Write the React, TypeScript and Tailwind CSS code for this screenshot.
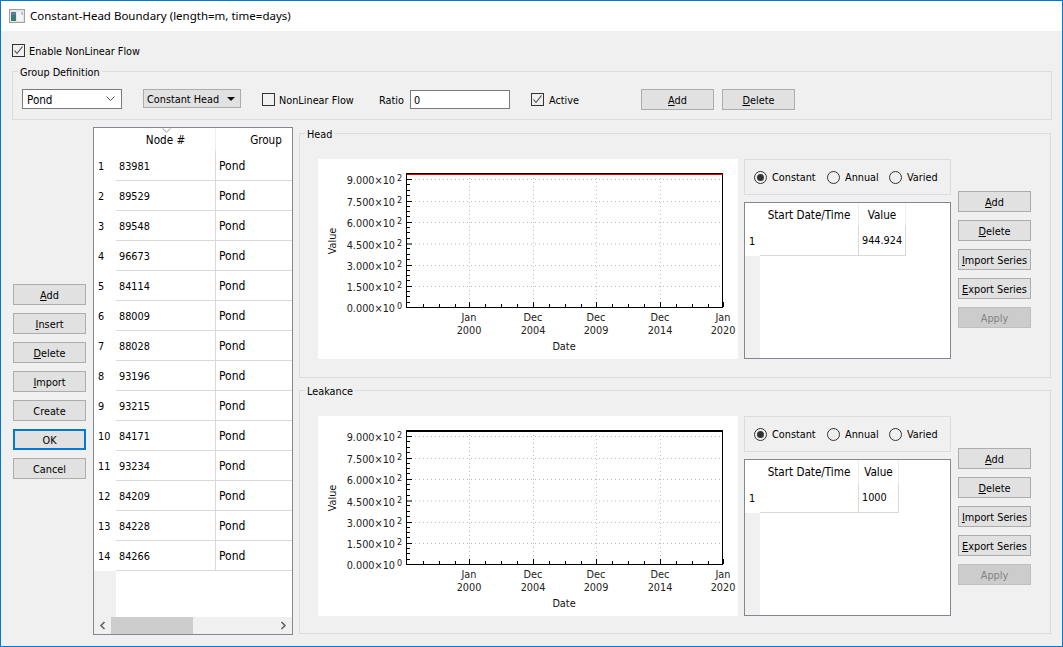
const nodes = [
  '83981', '89529', '89548', '96673', '84114', '88009', '88028',
  '93196', '93215', '84171', '93234', '84209', '84228', '84266',
]

const yLabels = [
  { y: 20, text: '9.000', exp: '2' },
  { y: 42, text: '7.500', exp: '2' },
  { y: 63, text: '6.000', exp: '2' },
  { y: 84.5, text: '4.500', exp: '2' },
  { y: 106, text: '3.000', exp: '2' },
  { y: 127, text: '1.500', exp: '2' },
  { y: 148, text: '0.000', exp: '0' },
]

const xLabels = [
  { x: 151, top: 'Jan', bottom: '2000' },
  { x: 215, top: 'Dec', bottom: '2004' },
  { x: 278, top: 'Dec', bottom: '2009' },
  { x: 342, top: 'Dec', bottom: '2014' },
  { x: 405, top: 'Jan', bottom: '2020' },
]

const xMinor = [105, 121, 137, 167, 183, 199, 231, 247, 263, 294, 310, 326, 358, 374, 390]

function Chart({ red }: { red?: boolean }) {
  const yMinor: number[] = []
  for (let i = 0; i < 6; i++) {
    for (let j = 1; j < 4; j++) yMinor.push(20 + i * 21.33 + (j * 21.33) / 4)
  }
  return (
    <div className="w-[420px] h-[200px] bg-white shrink-0">
      <svg width="420" height="200" className="block">
        {yLabels.slice(0, 6).map((l) => (
          <line key={l.y} x1="89" x2="405" y1={l.y + 0.5} y2={l.y + 0.5} stroke="#bbbbbb" strokeDasharray="1 3" />
        ))}
        {xLabels.slice(0, 4).map((l) => (
          <line key={l.x} x1={l.x + 0.5} x2={l.x + 0.5} y1="15" y2="148" stroke="#bbbbbb" strokeDasharray="1 3" />
        ))}
        {yLabels.map((l) => (
          <g key={l.y}>
            <line x1="89" x2="94" y1={l.y + 0.5} y2={l.y + 0.5} stroke="#000000" />
            <text x="77" y={l.y + 5} textAnchor="end" fill="#222222">
              {l.text}×10
            </text>
            <text x="79" y={l.y + 2} fontSize="9" fill="#222222">
              {l.exp}
            </text>
          </g>
        ))}
        {yMinor.map((y) => (
          <line key={y} x1="89" x2="92" y1={Math.round(y) + 0.5} y2={Math.round(y) + 0.5} stroke="#000000" />
        ))}
        {xMinor.map((x) => (
          <line key={x} x1={x + 0.5} x2={x + 0.5} y1="145" y2="148" stroke="#000000" />
        ))}
        {xLabels.map((l) => (
          <g key={l.x}>
            <line x1={l.x + 0.5} x2={l.x + 0.5} y1="143" y2="148" stroke="#000000" />
            <text x={l.x} y="162" textAnchor="middle" fill="#222222">
              {l.top}
            </text>
            <text x={l.x} y="175" textAnchor="middle" fill="#222222">
              {l.bottom}
            </text>
          </g>
        ))}
        <rect x="88.5" y="14.5" width="316" height="134" fill="none" stroke="#000000" />
        <line x1="89" x2="405" y1="15.5" y2="15.5" stroke={red ? '#e00000' : '#000000'} strokeWidth="1.2" />
        <text x="246" y="191" textAnchor="middle" fill="#111111">
          Date
        </text>
        <text transform="translate(18 82) rotate(-90)" textAnchor="middle" fill="#111111">
          Value
        </text>
      </svg>
    </div>
  )
}

function Btn({ u, rest, label, primary, disabled }: {
  u?: string
  rest?: string
  label?: string
  primary?: boolean
  disabled?: boolean
}) {
  let look = 'bg-[#e1e1e1] border border-[#adadad] text-black'
  if (primary) look = 'bg-[#e1e1e1] border-2 border-[#0078d7] text-black'
  if (disabled) look = 'bg-[#cccccc] border border-[#bfbfbf] text-[#838383]'
  return (
    <button className={`w-[73px] h-[21px] pt-[3px] flex items-center justify-center shrink-0 whitespace-nowrap ${look}`}>
      {u ? (
        <span>
          <u>{u}</u>
          {rest}
        </span>
      ) : (
        label
      )}
    </button>
  )
}

function Check({ on }: { on?: boolean }) {
  return (
    <span className="w-[13px] h-[13px] border border-[#333333] bg-transparent flex items-center justify-center shrink-0">
      {on && (
        <svg width="11" height="11" viewBox="0 0 11 11">
          <path d="M1.5 5.5 L4 8.5 L9.5 1.5" fill="none" stroke="#444444" strokeWidth="1.1" />
        </svg>
      )}
    </span>
  )
}

function Radio({ on, label, className }: { on?: boolean; label: string; className: string }) {
  return (
    <div className={`flex items-center gap-[5px] shrink-0 ${className}`}>
      <span className="w-[13px] h-[13px] rounded-full border border-[#333333] flex items-center justify-center shrink-0">
        {on && <span className="w-[7px] h-[7px] rounded-full bg-[#333333]" />}
      </span>
      <span className="pt-[3px]">{label}</span>
    </div>
  )
}

function SeriesPanel({ value, title, valueWidth, className }: {
  value: string
  title: string
  valueWidth: string
  className: string
}) {
  return (
    <section className={`relative w-[752px] border border-[#dcdcdc] ${className}`}>
      <span className="absolute left-[5px] -top-[7px] bg-[#f0f0f0] px-[2px] leading-[16px] h-[14px]">{title}</span>
      <div className="flex pl-[18px] pt-[25px]">
        <Chart red={title === 'Head'} />
        <div className="ml-[6px] w-[207px] shrink-0">
          <div className="h-[36px] border border-[#dcdcdc] flex items-center pl-[9px]">
            <Radio on label="Constant" className="w-[73px]" />
            <Radio label="Annual" className="w-[62px]" />
            <Radio label="Varied" className="w-[60px]" />
          </div>
          <div className="mt-[7px] h-[157px] border border-[#828790] bg-white flex">
            <div className="w-[15px] bg-[#f0f0f0] shrink-0">
              <div className="h-[23px] bg-white" />
              <div className="h-[30px] bg-white flex items-center pl-[4px] pt-[2px]">1</div>
            </div>
            <div>
              <div className="h-[23px] flex text-[11.6px]">
                <div className="w-[99px] text-center leading-[24px] border-r border-[#eeeeee]">Start Date/Time</div>
                <div className={`${valueWidth} text-center leading-[24px] border-r border-[#eeeeee]`}>Value</div>
              </div>
              <div className="h-[30px] flex border-b border-[#d9d9d9]">
                <div className="w-[99px] border-r border-[#d9d9d9]" />
                <div className={`${valueWidth} flex items-center pl-[3px] pt-[2px] border-r border-[#d9d9d9]`}>{value}</div>
              </div>
            </div>
          </div>
        </div>
        <div className="ml-[7px] pt-[32px] flex flex-col gap-[8px]">
          <Btn u="A" rest="dd" />
          <Btn u="D" rest="elete" />
          <Btn u="I" rest="mport Series" />
          <Btn u="E" rest="xport Series" />
          <Btn label="Apply" disabled />
        </div>
      </div>
    </section>
  )
}

export default function App() {
  return (
    <div className="w-[1063px] h-[647px] border border-[#0078d7] bg-[#f0f0f0] overflow-hidden text-[10.8px] text-black font-['DejaVu_Sans_Condensed','DejaVu_Sans',sans-serif]">
      <div className="h-[30px] bg-white flex items-center pl-[8px]">
        <svg width="16" height="14" viewBox="0 0 16 14" className="shrink-0">
          <rect x="0.5" y="0.5" width="15" height="13" fill="#e6e6e6" stroke="#a0a0a0" />
          <rect x="2" y="3" width="5" height="9" fill="#3c7a70" />
          <rect x="2" y="3" width="5" height="3" fill="#5a7f9a" />
          <rect x="8" y="3" width="6" height="9" fill="#f4f4f4" />
          <rect x="12" y="3" width="2" height="3" fill="#b8c4d0" />
        </svg>
        <span className="ml-[5px] text-[11.5px] text-black font-['Noto_Sans',sans-serif]">Constant-Head Boundary (length=m, time=days)</span>
      </div>

      <div className="pl-[11px]">
        <label className="mt-[13px] h-[13px] flex items-center gap-[4px]">
          <Check on />
          <span className="pt-[3px]">Enable NonLinear Flow</span>
        </label>

        <section className="relative mt-[14px] w-[1040px] h-[49px] border border-[#dcdcdc] flex items-start pl-[9px] pt-[17px]">
          <span className="absolute left-[5px] -top-[7px] bg-[#f0f0f0] px-[2px] leading-[16px] h-[14px]">Group Definition</span>
          <div className="w-[100px] h-[20px] bg-white border border-[#7a7a7a] flex items-center justify-between pl-[4px] pr-[6px]">
            <span className="pt-[3px] text-[11.6px]">Pond</span>
            <svg width="9" height="6" viewBox="0 0 9 6">
              <path d="M0.5 0.5 L4.5 4.5 L8.5 0.5" fill="none" stroke="#555555" />
            </svg>
          </div>
          <div className="ml-[21px] w-[98px] h-[19px] bg-[#e1e1e1] border border-[#adadad] flex items-center justify-between pl-[3px] pr-[5px] whitespace-nowrap">
            <span className="pt-[3px]">Constant Head</span>
            <svg width="8" height="4" viewBox="0 0 8 4">
              <path d="M0 0 H8 L4 4 Z" fill="#111111" />
            </svg>
          </div>
          <label className="ml-[21px] w-[117px] h-[21px] flex items-center gap-[4px]">
            <Check />
            <span className="pt-[3px]">NonLinear Flow</span>
          </label>
          <span className="w-[31px] h-[21px] leading-[23px]">Ratio</span>
          <input
            readOnly
            value="0"
            className="mt-[1px] w-[100px] h-[19px] bg-white border border-[#7a7a7a] pl-[3px] pt-[2px] outline-none"
          />
          <label className="ml-[21px] w-[110px] h-[21px] flex items-center gap-[5px]">
            <Check on />
            <span className="pt-[3px]">Active</span>
          </label>
          <div className="flex gap-[8px]">
            <Btn u="A" rest="dd" />
            <Btn u="D" rest="elete" />
          </div>
        </section>

        <div className="mt-[7px] flex items-start">
          <div className="ml-[1px] w-[73px] pt-[157px] flex flex-col gap-[8px] shrink-0">
            <Btn u="A" rest="dd" />
            <Btn u="I" rest="nsert" />
            <Btn u="D" rest="elete" />
            <Btn u="I" rest="mport" />
            <Btn label="Create" />
            <Btn label="OK" primary />
            <Btn label="Cancel" />
          </div>

          <div className="relative ml-[7px] w-[200px] h-[508px] border border-[#828790] bg-white flex flex-col shrink-0 overflow-hidden">
            <svg width="9" height="5" viewBox="0 0 9 5" className="absolute left-[68px] top-[0px]">
              <path d="M0.5 0.5 L4.5 4 L8.5 0.5" fill="none" stroke="#999999" />
            </svg>
            <div className="flex-1 flex">
              <div className="w-[22px] bg-[#f0f0f0] shrink-0">
                <div className="h-[23px] bg-white" />
                {nodes.map((n, i) => (
                  <div key={n} className="h-[30px] bg-white flex items-center pl-[4px] pt-[2px]">
                    {i + 1}
                  </div>
                ))}
              </div>
              <div className="flex-1 overflow-hidden">
                <div className="h-[23px] flex text-[11.6px]">
                  <div className="w-[100px] shrink-0 border-r border-[#eeeeee] text-center leading-[25px]">Node #</div>
                  <div className="w-[100px] shrink-0 text-center leading-[25px]">Group</div>
                </div>
                {nodes.map((n) => (
                  <div key={n} className="h-[30px] flex border-b border-[#d9d9d9]">
                    <div className="w-[100px] shrink-0 border-r border-[#d9d9d9] flex items-center pl-[3px] pt-[3px]">{n}</div>
                    <div className="flex-1 flex items-center pl-[3px] text-[12px]">Pond</div>
                  </div>
                ))}
              </div>
            </div>
            <div className="h-[17px] bg-[#f0f0f0] flex items-center justify-between px-[5px] shrink-0 relative">
              <svg width="7" height="9" viewBox="0 0 7 9">
                <path d="M5.5 1 L2 4.5 L5.5 8" fill="none" stroke="#606060" strokeWidth="1.6" />
              </svg>
              <div className="absolute left-[17px] top-0 w-[82px] h-[17px] bg-[#cdcdcd]" />
              <svg width="7" height="9" viewBox="0 0 7 9">
                <path d="M1.5 1 L5 4.5 L1.5 8" fill="none" stroke="#606060" strokeWidth="1.6" />
              </svg>
            </div>
          </div>

          <div className="ml-[6px] pt-[6px] shrink-0">
            <SeriesPanel title="Head" value="944.924" valueWidth="w-[47px]" className="h-[245px]" />
            <SeriesPanel title="Leakance" value="1000" valueWidth="w-[40px]" className="mt-[12px] h-[244px]" />
          </div>
        </div>
      </div>
    </div>
  )
}
